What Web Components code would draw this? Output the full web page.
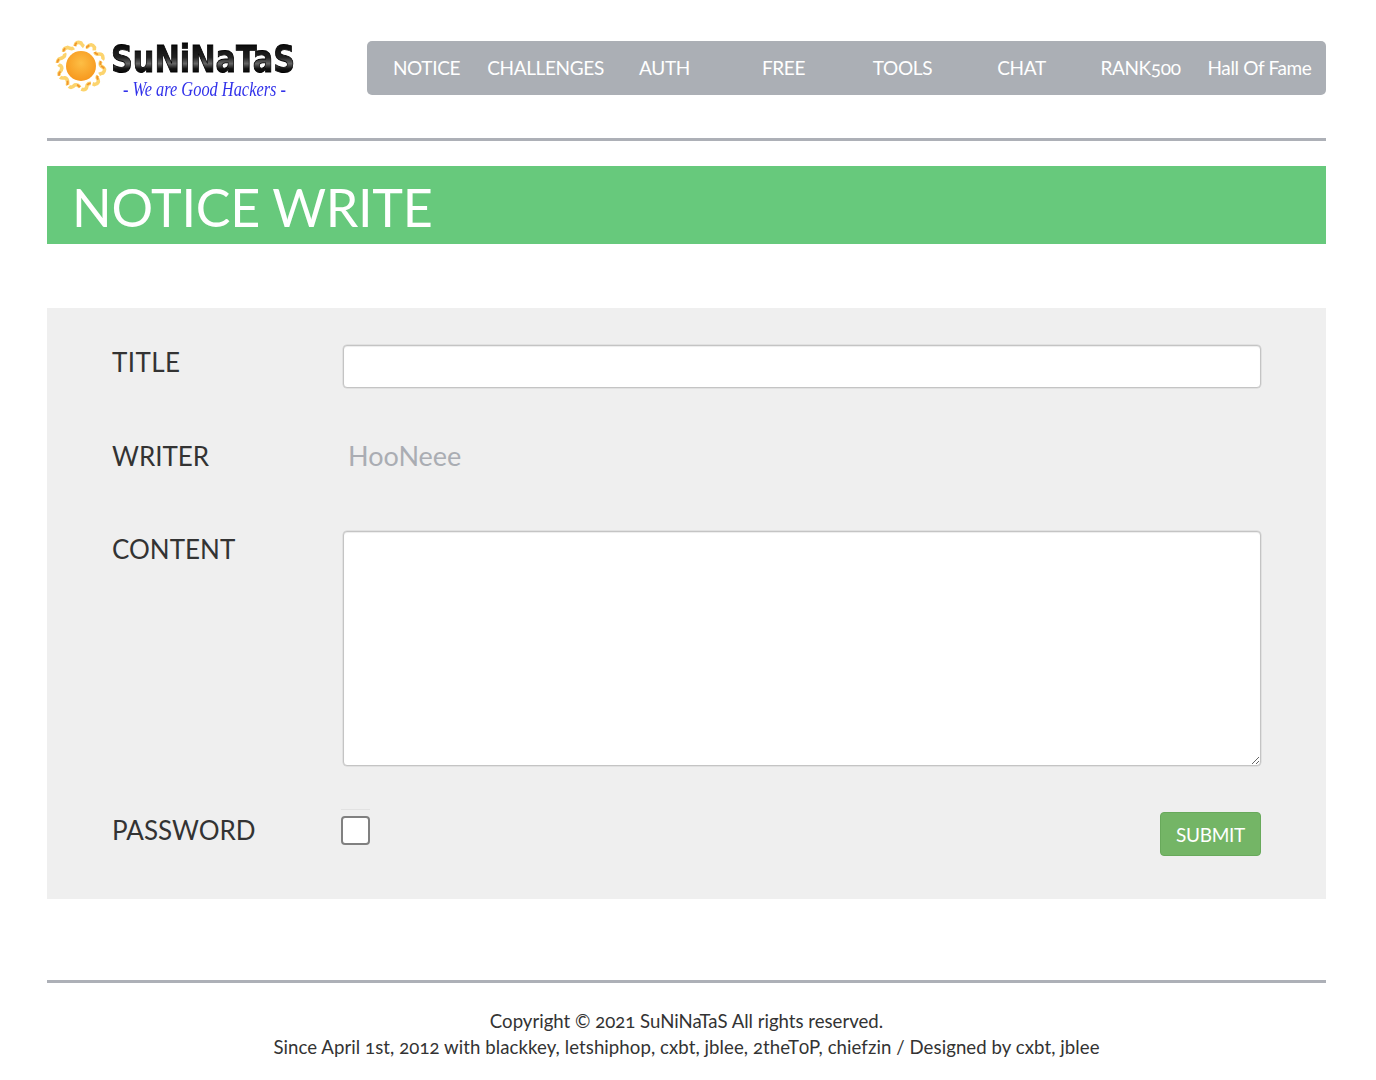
<!DOCTYPE html>
<html>
<head>
<meta charset="utf-8">
<title>NOTICE WRITE</title>
<style>
html, body { margin: 0; background: #fff; }
body { font-family: Lato, "Open Sans", sans-serif; color: #333; font-variant-numeric: oldstyle-nums; }
</style>
</head>
<body>
<app-page>
    <app-header slot="header"></app-header>
    <app-banner slot="banner">NOTICE WRITE</app-banner>
    <app-form slot="main"></app-form>
    <app-footer slot="footer"></app-footer>
</app-page>

<script>
class AppPage extends HTMLElement {
    constructor() {
        super();
        this.attachShadow({mode: "open"});
        this.shadowRoot.innerHTML = `
<style>
:host { display: block; width: 1279px; margin-left: 47px; }
::slotted([slot="banner"]) { margin-top: 25px; }
::slotted([slot="main"]) { margin-top: 64px; }
::slotted([slot="footer"]) { margin-top: 81px; }
</style>
<slot name="header"></slot>
<slot name="banner"></slot>
<slot name="main"></slot>
<slot name="footer"></slot>`;
    }
}
customElements.define("app-page", AppPage);

// wavy ring around the sun, 10 flames
function sunRing(cx, cy, r1, r2, n) {
    let d = "";
    for (let i = 0; i < n; i++) {
        let a = i / n * Math.PI * 2;
        let b = (i + 0.5) / n * Math.PI * 2;
        let c = (i + 1) / n * Math.PI * 2;
        let p0 = [cx + r1 * Math.cos(a), cy + r1 * Math.sin(a)];
        let p1 = [cx + (r2 + 3) * Math.cos(a + 0.1), cy + (r2 + 3) * Math.sin(a + 0.1)];
        let p2 = [cx + r2 * Math.cos(b), cy + r2 * Math.sin(b)];
        let p3 = [cx + (r1 - 2) * Math.cos(b + 0.15), cy + (r1 - 2) * Math.sin(b + 0.15)];
        let p4 = [cx + r1 * Math.cos(c), cy + r1 * Math.sin(c)];
        if (i == 0) d += "M" + p0[0].toFixed(1) + " " + p0[1].toFixed(1);
        d += "Q" + p1[0].toFixed(1) + " " + p1[1].toFixed(1) + " " + p2[0].toFixed(1) + " " + p2[1].toFixed(1);
        d += "Q" + p3[0].toFixed(1) + " " + p3[1].toFixed(1) + " " + p4[0].toFixed(1) + " " + p4[1].toFixed(1);
    }
    return d + "Z";
}

class AppLogo extends HTMLElement {
    constructor() {
        super();
        this.attachShadow({mode: "open"});
        let ring = sunRing(27, 33, 20, 23, 10);
        this.shadowRoot.innerHTML = `
<style>
:host { display: block; width: 250px; height: 72px; }
svg { display: block; overflow: visible; }
.soft { filter: blur(0.5px); }
</style>
<svg width="250" height="72" viewBox="0 0 250 72">
    <defs>
        <radialGradient id="sun" cx="50%" cy="40%" r="60%">
            <stop offset="0" stop-color="#fdbe45"/>
            <stop offset="1" stop-color="#f7981d"/>
        </radialGradient>
        <linearGradient id="metal" x1="0" y1="0" x2="0" y2="1">
            <stop offset="0" stop-color="#000"/>
            <stop offset=".45" stop-color="#222"/>
            <stop offset=".6" stop-color="#666"/>
            <stop offset=".72" stop-color="#111"/>
            <stop offset="1" stop-color="#000"/>
        </linearGradient>
    </defs>
    <g class="soft">
        <path d="${ring}" fill="none" stroke="#fcd46e" stroke-width="3.6" stroke-linejoin="round" stroke-dasharray="13 2"/>
        <path d="${ring}" fill="none" stroke="#f2962c" stroke-width="1.8" stroke-linejoin="round" stroke-dasharray="4 11"/>
        <circle cx="27" cy="33" r="15" fill="url(#sun)"/>
    </g>
    <g class="soft">
        <text transform="translate(57 39) scale(.82 1)" font-family="'DejaVu Sans'" font-weight="700" font-size="37" fill="url(#metal)" stroke="#000" stroke-width=".9">SuNiNaTaS</text>
        <text transform="translate(69 63) scale(.78 1)" font-family="'Liberation Serif'" font-style="italic" font-size="21" fill="#3232ea">- We are Good Hackers -</text>
    </g>
</svg>`;
    }
}
customElements.define("app-logo", AppLogo);

class AppHeader extends HTMLElement {
    constructor() {
        super();
        this.attachShadow({mode: "open"});
        this.shadowRoot.innerHTML = `
<style>
:host {
    display: flex;
    align-items: flex-start;
    padding-top: 33px;
    height: 105px;
    border-bottom: 3px solid #adb0b7;
    box-sizing: content-box;
}
app-logo { margin-left: 7px; }
nav {
    display: grid;
    grid-template-columns: repeat(8, 119px);
    margin-left: 63px;
    margin-top: 8px;
    width: 959px;
    height: 54px;
    padding-bottom: 2px;
    box-sizing: border-box;
    align-items: center;
    background: #abafb5;
    border-radius: 5px;
    color: #fff;
    font-size: 19px;
    letter-spacing: -0.35px;
}
nav span { text-align: center; white-space: nowrap; }
</style>
<app-logo></app-logo>
<nav>
    <span>NOTICE</span>
    <span>CHALLENGES</span>
    <span>AUTH</span>
    <span>FREE</span>
    <span>TOOLS</span>
    <span>CHAT</span>
    <span>RANK500</span>
    <span>Hall Of Fame</span>
</nav>`;
    }
}
customElements.define("app-header", AppHeader);

class AppBanner extends HTMLElement {
    constructor() {
        super();
        this.attachShadow({mode: "open"});
        this.shadowRoot.innerHTML = `
<style>
:host {
    display: block;
    height: 78px;
    padding-left: 25px;
    background: #67c97c;
    color: #fff;
    font-size: 52px;
    line-height: 83px;
    letter-spacing: -0.3px;
    white-space: nowrap;
}
</style>
<slot></slot>`;
    }
}
customElements.define("app-banner", AppBanner);

class AppForm extends HTMLElement {
    constructor() {
        super();
        this.attachShadow({mode: "open"});
        this.shadowRoot.innerHTML = `
<style>
:host {
    display: block;
    background: #efefef;
    padding: 36px 65px 43px;
    color: #333;
    font-size: 26px;
}
.row { display: grid; grid-template-columns: 231px 1fr; }
.label { line-height: 36px; }
.title { height: 44px; margin-bottom: 50px; }
.title .label { letter-spacing: 0.4px; }
.writer { height: 44px; margin-bottom: 49px; }
.writer .value { color: #aaadb3; padding-left: 5px; font-size: 27px; line-height: 36px; }
.content { height: 235px; margin-bottom: 46px; }
input, textarea {
    display: block;
    box-sizing: border-box;
    width: 918px;
    margin: 0;
    background: #fff;
    border: 1px solid #c4c4c4;
    border-radius: 4px;
    box-shadow: inset 0 1px 1px rgba(0, 0, 0, 0.075), 0 0 0 0.5px #d4d4d4;
    font: inherit;
}
input.text { height: 43px; margin-top: 1px; }
textarea { height: 235px; resize: vertical; }
.pw { height: 44px; display: flex; align-items: flex-start; }
.pw .label { width: 231px; line-height: 36px; }
.pw-box {
    margin-left: -2px;
    margin-top: -3px;
    width: 29px;
    height: 42px;
    padding-top: 6px;
    box-sizing: border-box;
    border-top: 1px solid #e2e2e2;
}
.pw-box i {
    display: block;
    width: 29px;
    height: 29px;
    box-sizing: border-box;
    background: #fff;
    border: 2px solid #808080;
    border-radius: 4px;
}
button {
    margin-left: auto;
    width: 101px;
    height: 44px;
    padding: 0;
    background: #74b566;
    border: 1px solid #68a95b;
    border-radius: 4px;
    color: #fff;
    font: inherit;
    font-size: 19px;
    letter-spacing: -0.3px;
}
</style>
<div class="row title">
    <div class="label">TITLE</div>
    <input class="text" type="text">
</div>
<div class="row writer">
    <div class="label">WRITER</div>
    <div class="value">HooNeee</div>
</div>
<div class="row content">
    <div class="label">CONTENT</div>
    <textarea></textarea>
</div>
<div class="pw">
    <div class="label">PASSWORD</div>
    <div class="pw-box"><i></i></div>
    <button type="button">SUBMIT</button>
</div>`;
    }
}
customElements.define("app-form", AppForm);

class AppFooter extends HTMLElement {
    constructor() {
        super();
        this.attachShadow({mode: "open"});
        this.shadowRoot.innerHTML = `
<style>
:host {
    display: block;
    border-top: 3px solid #adb0b7;
    padding-top: 25px;
    padding-bottom: 10px;
    text-align: center;
    font-size: 18.6px;
    line-height: 26px;
    color: #333;
}
.long { letter-spacing: 0.07px; }
</style>
<div>Copyright © 2021 SuNiNaTaS All rights reserved.</div>
<div class="long">Since April 1st, 2012 with blackkey, letshiphop, cxbt, jblee, 2theT0P, chiefzin / Designed by cxbt, jblee</div>`;
    }
}
customElements.define("app-footer", AppFooter);
</script>
</body>
</html>
